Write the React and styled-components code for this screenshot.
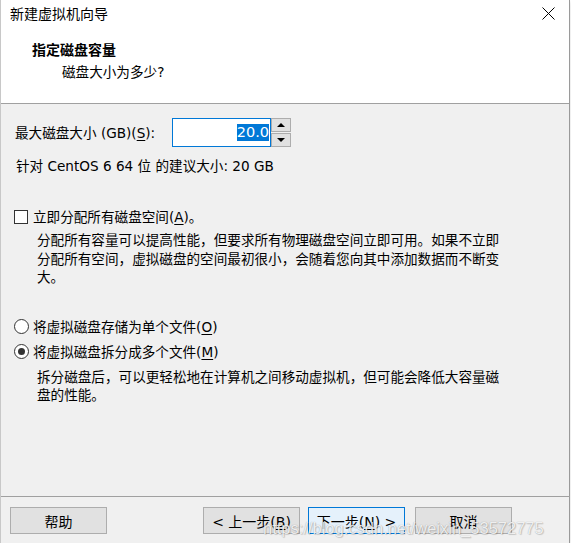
import styled, { createGlobalStyle } from 'styled-components'

const uiFont = '"DejaVu Sans", "Noto Sans CJK SC", sans-serif'

const GlobalStyle = createGlobalStyle`
  html, body {
    margin: 0;
    padding: 0;
    background: #ffffff;
  }
  body {
    font-family: ${uiFont};
    color: #000;
  }
`

const Window = styled.div`
  position: relative;
  width: 568px;
  height: 543px;
  display: flex;
  flex-direction: column;
  background: #f0f0f0;
  border-left: 1px solid #c8c8c8;
  border-right: 1px solid #9a9a9a;
  box-shadow: 0 2px 4px rgba(0, 0, 0, 0.15);
`

const Header = styled.div`
  height: 103px;
  background: #ffffff;
  border-bottom: 1px solid #a0a0a0;
  display: flex;
  flex-direction: column;
`

const TitleBar = styled.div`
  height: 26px;
  display: flex;
  align-items: center;
  justify-content: space-between;
  padding: 0 14px 0 9px;
  font-size: 14px;
`

const CloseButton = styled.svg`
  width: 13px;
  height: 13px;
`

const Heading = styled.div`
  margin: 14px 0 0 31px;
  font-size: 14px;
  font-weight: bold;
  line-height: 20px;
`

const SubHeading = styled.div`
  margin: 2px 0 0 61px;
  font-size: 13.6px;
  line-height: 20px;
`

const Content = styled.div`
  flex: 1;
  padding: 14px 0 0 14px;
  font-size: 13.6px;
`

const SizeRow = styled.div`
  display: flex;
  align-items: center;
  height: 29px;
`

const SizeLabel = styled.label`
  width: 157px;
  line-height: 18px;
  white-space: nowrap;
`

const Key = styled.span`
  text-decoration: underline;
  text-underline-offset: 2px;
`

const NumberBox = styled.div`
  width: 96px;
  height: 27px;
  border: 1px solid #0078d7;
  background: #fff;
  display: flex;
  align-items: center;
  justify-content: flex-end;
  padding-right: 1px;
`

const Selected = styled.span`
  background: #0078d7;
  color: #fff;
  font-size: 14.5px;
  line-height: 17px;
`

const Spinner = styled.div`
  width: 20px;
  height: 29px;
  display: flex;
  flex-direction: column;
  gap: 1px;
`

const SpinButton = styled.div`
  flex: 1;
  border: 1px solid #adadad;
  background: #e1e1e1;
  display: flex;
  align-items: center;
  justify-content: center;

  &::after {
    content: '';
    border-left: 4px solid transparent;
    border-right: 4px solid transparent;
    ${(p) => (p.$up ? 'border-bottom: 4px solid #000;' : 'border-top: 4px solid #000;')}
  }
`

const Line = styled.div`
  line-height: 18px;
  margin-top: ${(p) => p.$top || 0}px;
  padding-left: 1px;
`

const Option = styled.div`
  display: flex;
  align-items: center;
  gap: 5px;
  line-height: 18px;
  margin-top: ${(p) => p.$top || 0}px;
`

const CheckBox = styled.span`
  width: 12px;
  height: 12px;
  border: 1px solid #333;
  background: #fff;
  margin-left: -1px;
`

const Radio = styled.span`
  width: 13px;
  height: 13px;
  border: 1px solid #333;
  border-radius: 50%;
  background: #fff;
  margin-left: -1px;
  margin-right: -1px;
  display: flex;
  align-items: center;
  justify-content: center;

  &::after {
    content: '';
    width: 7px;
    height: 7px;
    border-radius: 50%;
    background: ${(p) => (p.$checked ? '#333' : 'transparent')};
  }
`

const Description = styled.p`
  margin: ${(p) => p.$top || 0}px 0 0 22px;
  width: 468px;
  line-height: 18.5px;
`

const Footer = styled.div`
  height: 47px;
  border-top: 1px solid #a0a0a0;
  margin-right: -1px;
  display: flex;
  align-items: flex-start;
  padding: 10px 0 0 9px;
  box-sizing: border-box;
`

const Button = styled.button`
  width: 97px;
  height: 27px;
  margin-left: ${(p) => p.$gap || 0}px;
  border: 1px solid ${(p) => (p.$primary ? '#0078d7' : '#adadad')};
  background: ${(p) => (p.$primary ? '#e5f1fb' : '#e1e1e1')};
  font-family: ${uiFont};
  font-size: 14px;
  padding: 0;
  color: #000;
`

const Watermark = styled.div`
  position: absolute;
  left: 262px;
  top: 519px;
  font-family: "Liberation Sans", Arial, sans-serif;
  font-size: 16.5px;
  color: rgba(255, 255, 255, 0.85);
  text-shadow: 0 0 1px rgba(0, 0, 0, 0.35), 1px 1px 1px rgba(0, 0, 0, 0.15);
  white-space: nowrap;
  pointer-events: none;
`

export default function App() {
  return (
    <>
      <GlobalStyle />
      <Window>
        <Header>
          <TitleBar>
            <span>新建虚拟机向导</span>
            <CloseButton viewBox="0 0 13 13">
              <path d="M0.5 0.5 L12.5 12.5 M12.5 0.5 L0.5 12.5" stroke="#000" strokeWidth="1" />
            </CloseButton>
          </TitleBar>
          <Heading>指定磁盘容量</Heading>
          <SubHeading>磁盘大小为多少?</SubHeading>
        </Header>

        <Content>
          <SizeRow>
            <SizeLabel>
              最大磁盘大小 (GB)(<Key>S</Key>):
            </SizeLabel>
            <NumberBox>
              <Selected>20.0</Selected>
            </NumberBox>
            <Spinner>
              <SpinButton $up />
              <SpinButton />
            </Spinner>
          </SizeRow>

          <Line $top={10}>针对 CentOS 6 64 位 的建议大小: 20 GB</Line>

          <Option $top={33}>
            <CheckBox />
            <span>
              立即分配所有磁盘空间(<Key>A</Key>)。
            </span>
          </Option>
          <Description $top={5}>
            分配所有容量可以提高性能，但要求所有物理磁盘空间立即可用。如果不立即分配所有空间，虚拟磁盘的空间最初很小，会随着您向其中添加数据而不断变大。
          </Description>

          <Option $top={31}>
            <Radio />
            <span>
              将虚拟磁盘存储为单个文件(<Key>O</Key>)
            </span>
          </Option>
          <Option $top={7}>
            <Radio $checked />
            <span>
              将虚拟磁盘拆分成多个文件(<Key>M</Key>)
            </span>
          </Option>
          <Description $top={7}>
            拆分磁盘后，可以更轻松地在计算机之间移动虚拟机，但可能会降低大容量磁盘的性能。
          </Description>
        </Content>

        <Footer>
          <Button>帮助</Button>
          <Button $gap={96}>
            &lt; 上一步(<Key>B</Key>)
          </Button>
          <Button $primary $gap={8}>
            下一步(<Key>N</Key>) &gt;
          </Button>
          <Button $gap={10}>取消</Button>
        </Footer>

        <Watermark>https://blog.csdn.net/weixin_53572775</Watermark>
      </Window>
    </>
  )
}
